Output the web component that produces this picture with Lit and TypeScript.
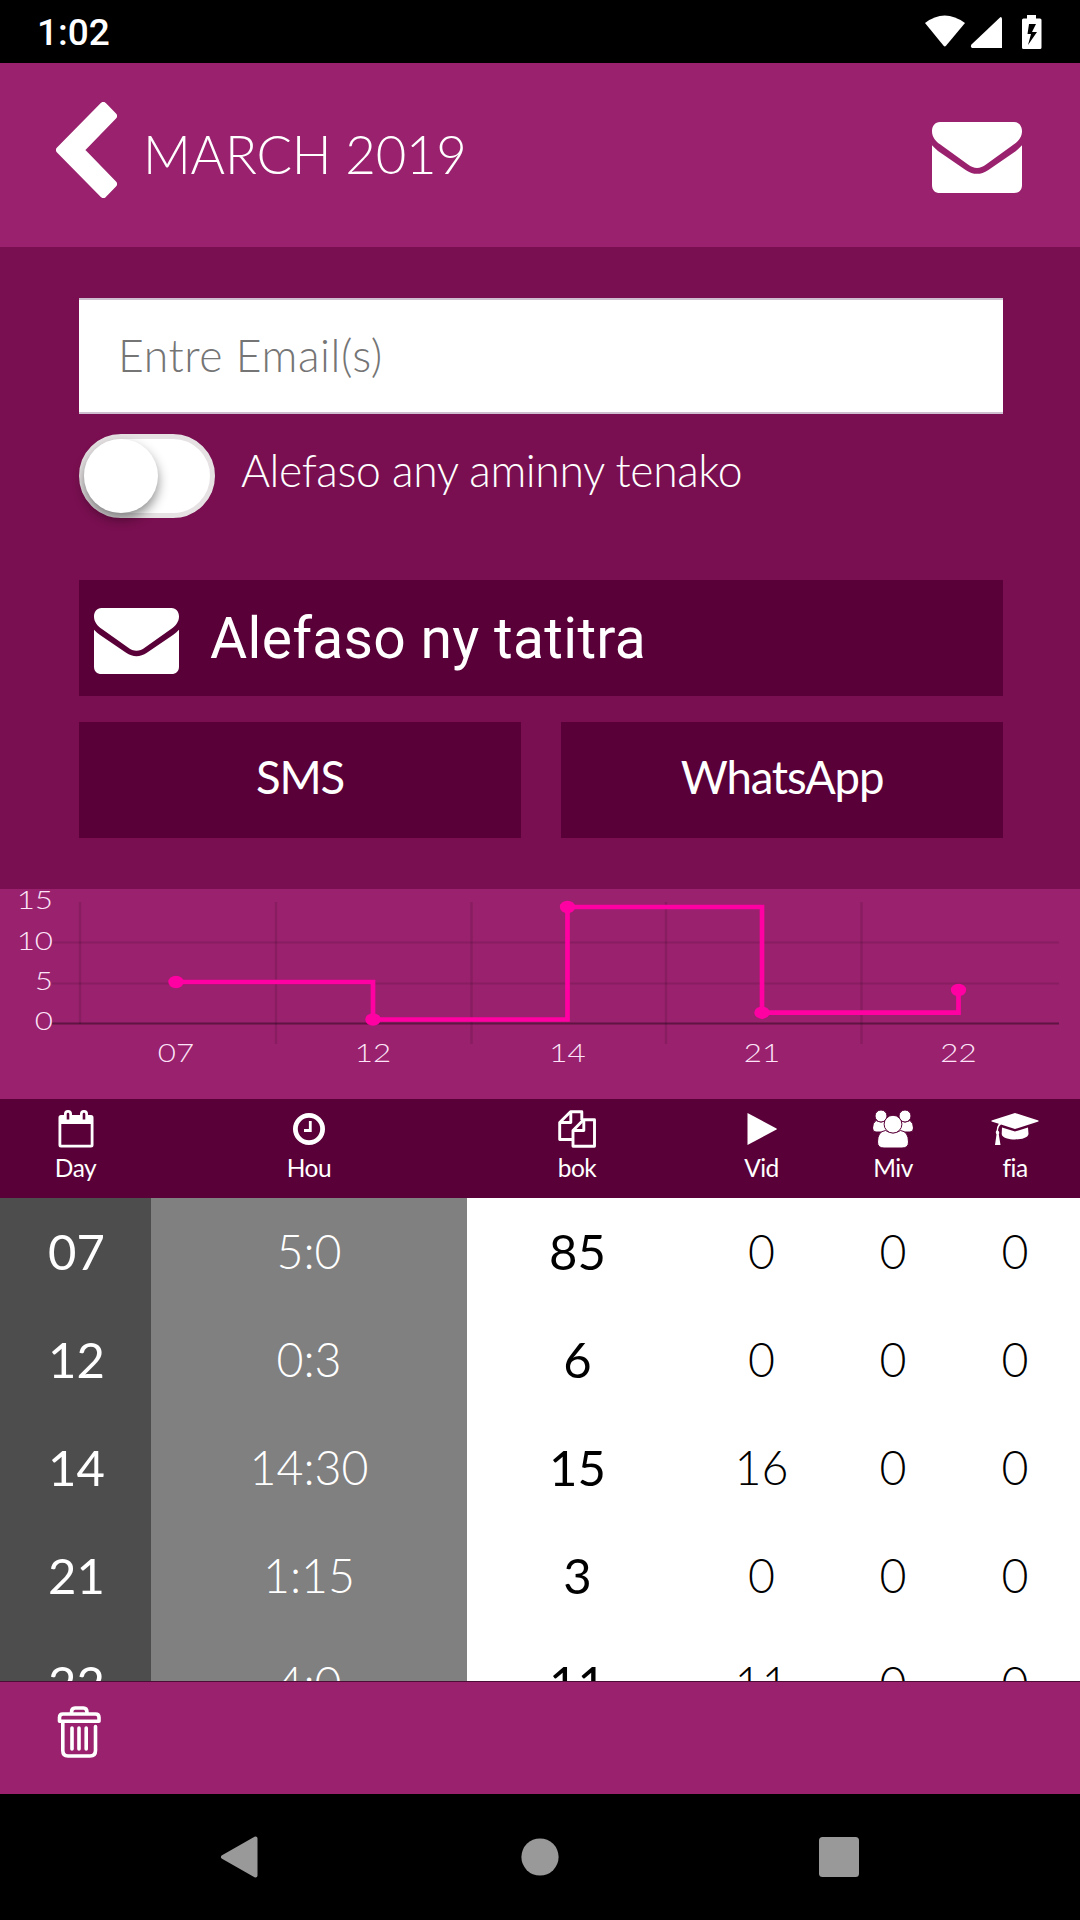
import { LitElement, html, css, svg } from "lit";
import { customElement, state } from "lit/decorators.js";

interface DayRow {
  day: string;
  hours: string;
  books: number;
  videos: number;
  visits: number;
  studies: number;
}

const ROWS: DayRow[] = [
  { day: "07", hours: "5:0", books: 85, videos: 0, visits: 0, studies: 0 },
  { day: "12", hours: "0:3", books: 6, videos: 0, visits: 0, studies: 0 },
  { day: "14", hours: "14:30", books: 15, videos: 16, visits: 0, studies: 0 },
  { day: "21", hours: "1:15", books: 3, videos: 0, visits: 0, studies: 0 },
  { day: "22", hours: "4:0", books: 11, videos: 11, visits: 0, studies: 0 },
];

const envelope = svg`
  <path fill="#fff" d="M8 0H82C87 0 90 4 90 9C90 15 86 19 82 22L54 42C48 46.500 42 46.500 36 42L8 22C4 19 0 15 0 9C0 4 3 0 8 0Z"/>
  <path fill="#fff" d="M0 23C2 25 4 27 6 28.500L34 47.500C41 52.300 49 52.300 56 47.500L84 28.500C86 27 88 25 90 23V62C90 67 87 70 82 70H8C3 70 0 67 0 62Z"/>`;

const calendarIcon = html`<svg class="ico" width="36" height="38" viewBox="0 0 36 38">
  <path fill="#fff" fill-rule="evenodd" d="M3 5H6V4A4 4 0 0 1 14 4V5H22V4A4 4 0 0 1 30 4V5H33A2.500 2.500 0 0 1 35.500 7.500V35A2.500 2.500 0 0 1 33 37.500H3A2.500 2.500 0 0 1 .5 35V7.500A2.500 2.500 0 0 1 3 5ZM3.300 14V34.800H32.700V14ZM8.700 4V9.500H11.300V4A1.300 1.300 0 0 0 8.700 4ZM24.700 4V9.500H27.300V4A1.300 1.300 0 0 0 24.700 4Z"/>
</svg>`;

const clockIcon = html`<svg class="ico" width="36" height="38" viewBox="0 0 36 38">
  <circle cx="18" cy="19" r="13.600" fill="none" stroke="#fff" stroke-width="4.800"/>
  <path d="M19.300 11V20.500H13" fill="none" stroke="#fff" stroke-width="2.800"/>
</svg>`;

const copyIcon = html`<svg class="ico" width="38" height="38" viewBox="0 0 38 38">
  <g fill="none" stroke="#fff" stroke-width="2.900" stroke-linejoin="round">
    <path d="M14 29.500H1.700V12.500L12.500 1.700H23.800V10"/>
    <path d="M12.800 2V12.500H2"/>
    <path d="M15 20.500L25.500 9.700H36.500V36.300H15Z"/>
    <path d="M25.800 10V20.500H15.200"/>
  </g>
</svg>`;

const playIcon = html`<svg class="ico" width="30" height="38" viewBox="0 0 30 38">
  <path fill="#fff" d="M.5 3L29.500 18.400Q30.200 19 29.500 19.600L.5 35Z"/>
</svg>`;

const usersIcon = html`<svg class="ico" width="40" height="38" viewBox="0 0 40 38">
  <g fill="#fff" stroke="#5a0038" stroke-width="1">
    <path d="M3 10.500Q8 13.500 13 10.500L17 22H3Q-.5 22 -.5 18Q-.5 13 3 10.500Z"/>
    <path d="M37 10.500Q32 13.500 27 10.500L23 22H37Q40.500 22 40.500 18Q40.500 13 37 10.500Z"/>
    <circle cx="8" cy="6" r="6"/><circle cx="32" cy="6" r="6"/>
    <path d="M12.500 20.500Q20 25 27.500 20.500Q35.500 21.500 35.500 32Q35.500 38 29 38H11Q4.500 38 4.500 32Q4.500 21.500 12.500 20.500Z"/>
    <circle cx="20" cy="14.200" r="8.900"/>
  </g>
</svg>`;

const capIcon = html`<svg class="ico" width="48" height="38" viewBox="0 0 48 38">
  <g fill="#fff">
    <path d="M24 3L47.500 10.500V11.500L24 19L10 14.500Q7.500 16 7 20.500Q9 22 7.800 24.500L9.500 35H4L5.500 24.500Q4 22 5.700 20.300Q6 16 7.800 13.700L.5 11.500V10.500Z"/>
    <path d="M11 17.500L24 21.500L37 17.500L37.500 24C37 28 30 29.500 24 29.500S11 28 10.700 24Z"/>
  </g>
</svg>`;

@customElement("month-chart")
class MonthChart extends LitElement {
  static styles = css`
    :host {
      display: block;
      height: 210px;
      background: #99216d;
    }
    .plot {
      display: block;
    }
    .label {
      font: 300 24.500px Lato, sans-serif;
      fill: #fde4f8;
    }
  `;

  private points = [
    { label: "07", x: 176, y: 93 },
    { label: "12", x: 373, y: 130.500 },
    { label: "14", x: 567.500, y: 18 },
    { label: "21", x: 762, y: 123.700 },
    { label: "22", x: 958.500, y: 101 },
  ];

  private ticks = [
    { label: "15", y: 19.700 },
    { label: "10", y: 60.500 },
    { label: "5", y: 100.500 },
    { label: "0", y: 140.500 },
  ];

  render() {
    const line = this.points
      .map((p, i) => (i === 0 ? `M${p.x} ${p.y}` : `H${p.x}V${p.y}`))
      .join("");
    return html`<svg class="plot" width="1080" height="210" viewBox="0 0 1080 210">
      <g stroke="#000" stroke-opacity=".11" stroke-width="2.400">
        <path d="M80 13V135M276 13V155M471.500 13V155M666 13V155M861.500 13V155"/>
        <path d="M52 53.500H1059M52 94.500H1059" stroke-width="2"/>
      </g>
      <path d="M52 134.500H1059" stroke="#000" stroke-opacity=".38" stroke-width="2"/>
      <path d=${line} fill="none" stroke="#ff00a2" stroke-width="4.700"/>
      ${this.points.map(
        (p) => svg`<ellipse cx=${p.x} cy=${p.y} rx="7.700" ry="6.200" fill="#ff00a2"/>
          <text class="label" text-anchor="middle" transform="translate(${p.x} 173) scale(1.28 1)">${p.label}</text>`
      )}
      ${this.ticks.map(
        (t) => svg`<text class="label" text-anchor="end" transform="translate(53 ${t.y}) scale(1.28 1)">${t.label}</text>`
      )}
    </svg>`;
  }
}

@customElement("app-root")
class AppRoot extends LitElement {
  static styles = css`
    :host {
      display: flex;
      flex-direction: column;
      width: 1080px;
      height: 1920px;
      overflow: hidden;
      background: #000;
      color: #fff;
      font-family: Lato, sans-serif;
      font-weight: 300;
    }
    * {
      box-sizing: border-box;
    }
    svg {
      display: block;
      flex: none;
    }
    .status {
      display: flex;
      align-items: center;
      justify-content: space-between;
      height: 63px;
      padding: 0 38px 0 37px;
      flex: none;
    }
    .time {
      font: 500 37px/44px Roboto, sans-serif;
      padding-top: 2px;
    }
    .header {
      display: flex;
      align-items: center;
      height: 184px;
      flex: none;
      padding: 0 58px 0 56px;
      background: #99216d;
    }
    .back {
      margin-bottom: 10px;
    }
    .title {
      flex: 1;
      margin: 0;
      padding: 0 0 2px 26px;
      font-weight: 300;
      font-size: 52.700px;
      line-height: 64px;
      letter-spacing: -0.250px;
    }
    .mail {
      margin-top: 4px;
    }
    .panel {
      display: flex;
      flex-direction: column;
      height: 642px;
      flex: none;
      padding: 51px 77px 0 79px;
      background: #790f50;
    }
    .email {
      width: 100%;
      height: 116px;
      margin: 0;
      padding: 0 0 3px 39px;
      border: 0 solid #cdbfd0;
      border-width: 2px 0;
      border-radius: 0;
      background: #fff;
      font: 300 44.500px/54px Lato, sans-serif;
      letter-spacing: 0.600px;
      color: #333;
      outline: none;
    }
    .email::placeholder {
      color: #757575;
      opacity: 1;
    }
    .switch-row {
      display: flex;
      height: 84px;
      margin-top: 20px;
      gap: 26px;
    }
    .switch {
      width: 136px;
      height: 84px;
      padding: 0;
      border: 5px solid #e6e2e4;
      border-radius: 42px;
      background: #fff;
    }
    .knob {
      display: block;
      width: 74px;
      height: 74px;
      border-radius: 50%;
      background: #fff;
      box-shadow: 0 6px 12px rgba(0, 0, 0, 0.45);
    }
    .switch-text {
      font-size: 44.500px;
      line-height: 54px;
      padding-top: 9px;
      letter-spacing: -0.400px;
    }
    .send {
      display: flex;
      align-items: center;
      height: 116px;
      margin-top: 62px;
      padding: 0 0 0 15px;
      gap: 31px;
      border: 0;
      background: #5a0038;
      color: #fff;
      font: 400 57px/66px Roboto, sans-serif;
      letter-spacing: 0.300px;
    }
    .send-icon {
      margin-top: 6px;
    }
    .send-text {
      padding-top: 2px;
    }
    .pair {
      display: grid;
      grid-template-columns: 1fr 1fr;
      gap: 40px;
      margin-top: 26px;
    }
    .share {
      height: 116px;
      padding: 0 0 6px;
      border: 0;
      background: #5a0038;
      color: #fff;
      font: 400 45.500px/56px Lato, sans-serif;
      letter-spacing: -1.200px;
    }
    .row {
      display: grid;
      grid-template-columns: 151px 316px 220px 149px 114px 130px;
    }
    .heads {
      height: 99px;
      flex: none;
      background: #5a0038;
    }
    .head {
      display: flex;
      flex-direction: column;
      align-items: center;
      padding-top: 11px;
      font-weight: 400;
      font-size: 24.500px;
      line-height: 30px;
      letter-spacing: -0.500px;
    }
    .head-text {
      padding-top: 5px;
    }
    .table {
      flex: 1;
      min-height: 0;
      overflow: hidden;
      background: #fff;
      color: #000;
    }
    .cell {
      height: 108px;
      line-height: 106px;
      text-align: center;
      font-size: 46.500px;
    }
    .day {
      padding-left: 2px;
      background: #4d4d4d;
      color: #fff;
      font-weight: 400;
      font-size: 49px;
    }
    .hours {
      background: #808080;
      color: #fff;
    }
    .books {
      padding-left: 1px;
      font-weight: 400;
      font-size: 49px;
    }
    .tools {
      height: 113px;
      flex: none;
      padding: 24px 0 0 57px;
      border-top: 1px solid #4c0d35;
      background: #99216d;
    }
    .nav {
      display: flex;
      justify-content: center;
      align-items: center;
      height: 126px;
      flex: none;
      padding: 0 3px 0 0;
      gap: 260px;
    }
  `;

  @state() private rows = ROWS;

  private head(icon: unknown, text: string) {
    return html`<div class="head">${icon}<span class="head-text">${text}</span></div>`;
  }

  render() {
    return html`
      <div class="status">
        <span class="time">1:02</span>
        <svg width="118" height="40" viewBox="924 11 118 40">
          <g fill="#fff">
            <path d="M925 22Q944.500 7 965 22L946 44.800Q944.800 46 943.600 44.800Z"/>
            <path d="M1000.500 16Q1002 16 1002 18V47H972Q970 45.500 971.500 43.500Z"/>
            <path fill-rule="evenodd" d="M1027 14H1036V17.500H1040Q1041.500 17.500 1041.500 19V46.500Q1041.500 48 1040 48H1023.500Q1022 48 1022 46.500V19Q1022 17.500 1023.500 17.500H1027ZM1029 23L1027.500 33H1031L1028 44L1037 31H1032L1036 23Z"/>
          </g>
        </svg>
      </div>

      <div class="header">
        <svg class="back" width="61" height="96" viewBox="56 102 61 96">
          <path fill="#fff" stroke="#fff" stroke-width="7" stroke-linejoin="round" d="M103.300 105.500L113.500 116L80.500 150L113.500 184L103.300 194.500L59.500 150Z"/>
        </svg>
        <h1 class="title">MARCH 2019</h1>
        <svg class="mail" width="90" height="71" viewBox="0 0 90 70" preserveAspectRatio="none">${envelope}</svg>
      </div>

      <div class="panel">
        <input class="email" type="text" placeholder="Entre Email(s)" />
        <div class="switch-row">
          <button class="switch" role="switch" aria-checked="false"><span class="knob"></span></button>
          <span class="switch-text">Alefaso any aminny tenako</span>
        </div>
        <button class="send">
          <svg class="send-icon" width="85" height="66" viewBox="0 0 90 70" preserveAspectRatio="none">${envelope}</svg>
          <span class="send-text">Alefaso ny tatitra</span>
        </button>
        <div class="pair">
          <button class="share">SMS</button>
          <button class="share">WhatsApp</button>
        </div>
      </div>

      <month-chart></month-chart>

      <div class="row heads">
        ${this.head(calendarIcon, "Day")} ${this.head(clockIcon, "Hou")}
        ${this.head(copyIcon, "bok")} ${this.head(playIcon, "Vid")}
        ${this.head(usersIcon, "Miv")} ${this.head(capIcon, "fia")}
      </div>

      <div class="table">
        ${this.rows.map(
          (r) => html`<div class="row">
            <div class="cell day">${r.day}</div>
            <div class="cell hours">${r.hours}</div>
            <div class="cell books">${r.books}</div>
            <div class="cell">${r.videos}</div>
            <div class="cell">${r.visits}</div>
            <div class="cell">${r.studies}</div>
          </div>`
        )}
      </div>

      <div class="tools">
        <svg width="44" height="52" viewBox="57 1705.500 44 52">
          <g fill="none" stroke="#fff" stroke-width="3.600" stroke-linejoin="round" stroke-linecap="round">
            <path d="M71.500 1712Q71.500 1707.500 75 1707.500H83.500Q87 1707.500 87 1712"/>
            <path d="M59.500 1720.700V1717Q59.500 1713.500 63 1713.500H95.500Q99 1713.500 99 1717V1720.700Z"/>
            <path d="M62.800 1722V1750Q62.800 1755.500 68 1755.500H90Q95.500 1755.500 95.500 1750V1726"/>
            <path d="M72 1727.500V1748.500M79 1727.500V1748.500M86.200 1727.500V1748.500"/>
          </g>
        </svg>
      </div>

      <div class="nav">
        <svg width="40" height="42" viewBox="0 0 40 42"><path fill="#999" stroke="#999" stroke-width="4" stroke-linejoin="round" d="M36.500 2.500V39.500L4 21Z"/></svg>
        <svg width="40" height="40" viewBox="0 0 40 40"><circle cx="21" cy="20" r="18.600" fill="#999"/></svg>
        <svg width="40" height="40" viewBox="0 0 40 40"><rect width="40" height="40" rx="3.500" fill="#999"/></svg>
      </div>
    `;
  }
}
